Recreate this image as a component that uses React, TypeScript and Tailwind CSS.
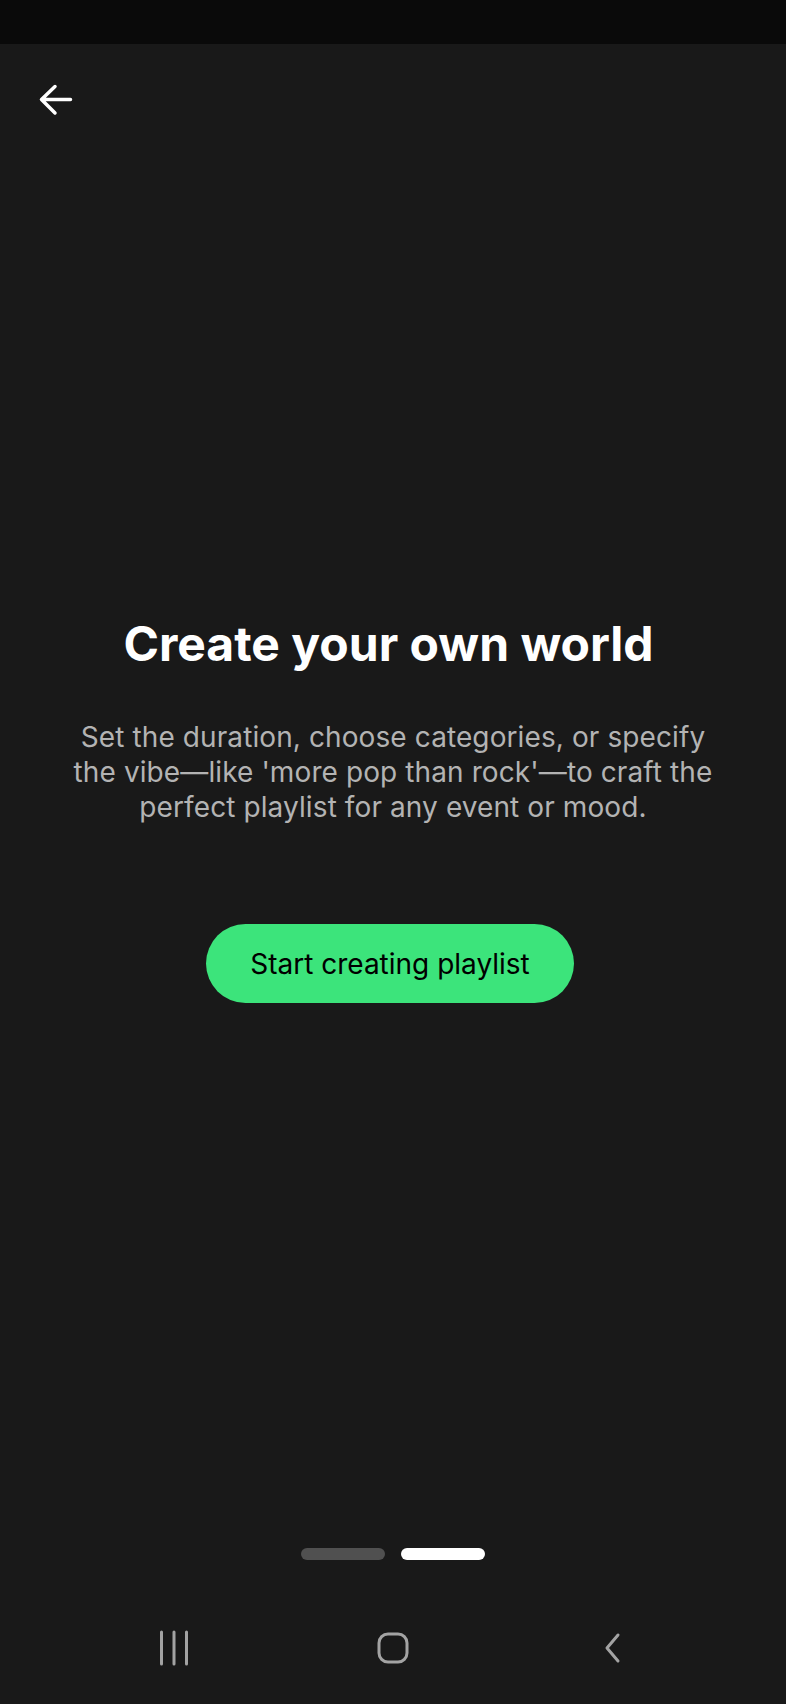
import React from "react";

function BackArrow() {
  return (
    <svg width="40" height="40" viewBox="0 0 40 40" fill="none">
      <path
        d="M19 6.5 L5.5 19.5 L19 33 M5.5 19.5 H34.5"
        stroke="#ffffff"
        strokeWidth="3.5"
        strokeLinecap="round"
        strokeLinejoin="round"
      />
    </svg>
  );
}

function RecentsIcon() {
  return (
    <svg width="32" height="38" viewBox="0 0 32 38" fill="none">
      <path
        d="M3.5 3 V35 M16 3 V35 M28.5 3 V35"
        stroke="#a3a3a3"
        strokeWidth="3"
        strokeLinecap="round"
      />
    </svg>
  );
}

function HomeIcon() {
  return (
    <svg width="32" height="32" viewBox="0 0 32 32" fill="none">
      <rect x="2" y="2" width="28" height="28" rx="9" stroke="#a3a3a3" strokeWidth="3" />
    </svg>
  );
}

function NavBackIcon() {
  return (
    <svg width="20" height="32" viewBox="0 0 20 32" fill="none">
      <path
        d="M16 3 L5 16 L16 29"
        stroke="#a3a3a3"
        strokeWidth="3"
        strokeLinecap="round"
        strokeLinejoin="round"
      />
    </svg>
  );
}

export default function App() {
  return (
    <div className="flex h-[1704px] w-full flex-col bg-[#191919] font-['Inter','Noto_Sans',sans-serif]">
      {/* status bar */}
      <div className="h-[44px] w-full bg-[#0a0a0a]" />

      {/* header */}
      <div className="h-[106px] pl-[36px] pt-[36px]">
        <button className="block">
          <BackArrow />
        </button>
      </div>

      {/* content */}
      <div className="mt-[465px] flex flex-col items-center px-[30px] text-center">
        <h1 className="mr-[9px] text-[48px] font-bold leading-[58px] text-white">
          Create your own world
        </h1>
        <p className="mt-[47px] max-w-[650px] text-[28px] leading-[35px] tracking-[0.1px] text-[#b3b3b3]">
          Set the duration, choose categories, or specify the vibe—like 'more pop than rock'—to craft the perfect playlist for any event or mood.
        </p>
        <button className="mr-[6px] mt-[99px] flex h-[79px] w-[368px] items-center justify-center rounded-full bg-[#3ce47b] text-[28px] text-black">
          Start creating playlist
        </button>
      </div>

      <div className="flex-1" />

      {/* page indicators */}
      <div className="flex justify-center gap-[16px]">
        <div className="h-[12px] w-[84px] rounded-full bg-[#505050]" />
        <div className="h-[12px] w-[84px] rounded-full bg-white" />
      </div>

      {/* system nav bar */}
      <div className="mt-[32px] flex h-[112px] items-center justify-center">
        <div className="flex w-[219px] justify-center">
          <RecentsIcon />
        </div>
        <div className="flex w-[219px] justify-center">
          <HomeIcon />
        </div>
        <div className="flex w-[219px] justify-center">
          <NavBackIcon />
        </div>
      </div>
    </div>
  );
}
